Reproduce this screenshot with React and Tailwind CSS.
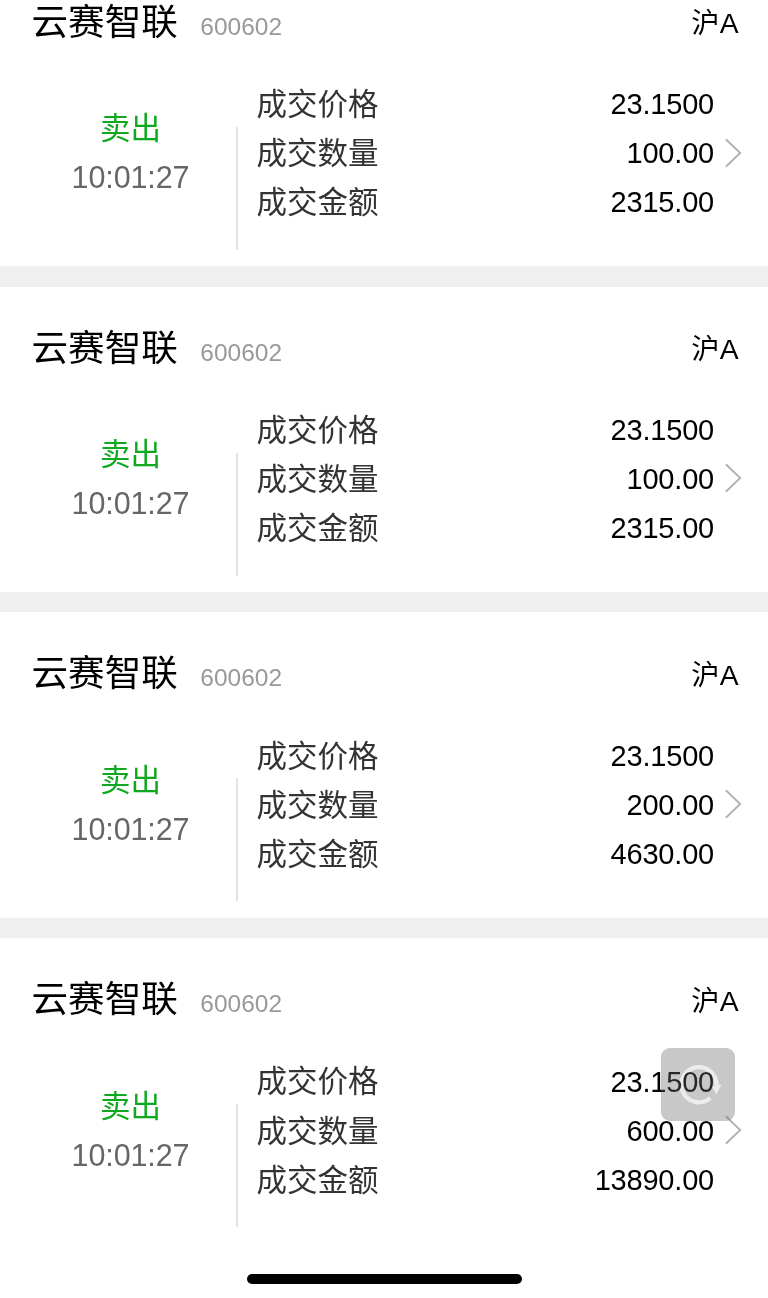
const trades = [
  { id: 1, price: '23.1500', volume: '100.00', amount: '2315.00' },
  { id: 2, price: '23.1500', volume: '100.00', amount: '2315.00' },
  { id: 3, price: '23.1500', volume: '200.00', amount: '4630.00' },
  { id: 4, price: '23.1500', volume: '600.00', amount: '13890.00' },
];

function DetailRow({ label, value }) {
  return (
    <div className="flex h-[49.2px] items-center justify-between">
      <span className="text-[30.5px] text-[#333333]">{label}</span>
      <span className="text-[29px] tracking-[-0.2px] text-black">{value}</span>
    </div>
  );
}

function TradeCard({ trade }) {
  return (
    <div className="h-[305.4px] bg-white pt-[38px]">
      {/* Stock name, code and market */}
      <div className="flex h-12 items-center justify-between pl-[31.5px] pr-[29.5px]">
        <div className="flex items-baseline">
          <h2 className="text-[36.6px] leading-[48px] text-black">云赛智联</h2>
          <span className="ml-[22.5px] text-[24.5px] text-[#999999]">600602</span>
        </div>
        <span className="pt-px text-[28.3px] text-black">沪A</span>
      </div>

      <div className="mt-[33.4px] flex">
        {/* Direction and time */}
        <div className="flex w-[236px] flex-col items-center pl-[25px] pt-6">
          <span className="h-[49px] text-[30.5px] leading-[49px] text-[#0fa91f]">卖出</span>
          <span className="h-[49px] text-[30.5px] leading-[49px] tracking-[-0.1px] text-[#666666]">10:01:27</span>
        </div>
        <div className="mt-[46.6px] h-[123px] w-[2px] bg-[#e2e2e2]" />

        <div className="ml-[18.5px] flex-1">
          <DetailRow label="成交价格" value={trade.price} />
          <DetailRow label="成交数量" value={trade.volume} />
          <DetailRow label="成交金额" value={trade.amount} />
        </div>

        <div className="flex h-[145px] w-[54px] items-center pl-2.5">
          <svg className="h-[30px] w-[19px]" viewBox="0 0 19 30" fill="none" stroke="#b2b2b2" strokeWidth="1.9">
            <path d="M1.8 1.2L16.2 15L1.8 28.8" />
          </svg>
        </div>
      </div>
    </div>
  );
}

export default function App() {
  return (
    <div className="relative h-[1298px] w-[768px] overflow-hidden bg-white font-['Liberation_Sans','Noto_Sans_CJK_SC',sans-serif]">
      <div className="-mt-[39.3px] flex flex-col gap-[20.5px] bg-[#efefef]">
        {trades.map((trade) => (
          <TradeCard key={trade.id} trade={trade} />
        ))}
      </div>

      {/* Floating refresh button, tints the row under it */}
      <button className="absolute left-[661px] top-[1048px] h-[73px] w-[74px] rounded-[9px] bg-[#c9c9c9] mix-blend-multiply">
        <svg className="h-full w-full" viewBox="0 0 74 73" fill="none">
          <path d="M49.2 50.2A17.6 17.6 0 1 1 55.5 38" stroke="#f6f6f6" strokeWidth="4.2" />
          <path d="M51 38L60.4 36.5L55.3 46.5Z" fill="#f6f6f6" />
        </svg>
      </button>
      <div className="pointer-events-none absolute left-[661px] top-[1048px] h-[73px] w-[74px] rounded-[9px] bg-[#c9c9c9]/20" />

      {/* Home indicator */}
      <div className="absolute left-[246.5px] top-[1274px] h-[9.5px] w-[275px] rounded-full bg-black" />
    </div>
  );
}
